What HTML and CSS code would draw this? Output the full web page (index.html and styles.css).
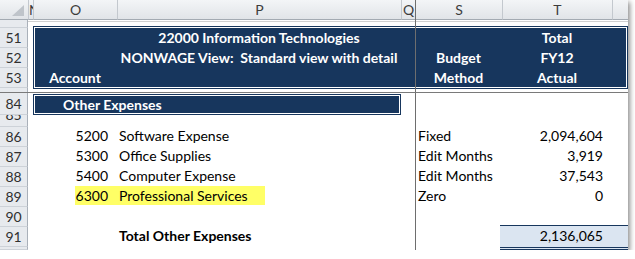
FILE: index.html
```html
<!DOCTYPE html>
<html>
<head>
<meta charset="utf-8">
<title>Other Expenses</title>
<link rel="stylesheet" href="styles.css">
</head>
<body>
<div class="sheet">
  <div class="ch corner"><svg width="12" height="11" viewBox="0 0 12 11"><polygon points="0,11 12,11 12,0" fill="#bfc4ca"/></svg></div>
  <div class="ch c-n">N</div>
  <div class="ch c-o">O</div>
  <div class="ch c-p">P</div>
  <div class="ch c-q">Q</div>
  <div class="ch c-s">S</div>
  <div class="ch c-t">T</div>
  <div class="ch c-u"></div>

  <div class="rh r-top"></div>
  <div class="rh r51">51</div>
  <div class="rh r52">52</div>
  <div class="rh r53">53</div>
  <div class="rh r-gap"></div>
  <div class="rh r84">84</div>
  <div class="rh r85 short">85</div>
  <div class="rh r86">86</div>
  <div class="rh r87">87</div>
  <div class="rh r88">88</div>
  <div class="rh r89">89</div>
  <div class="rh r90">90</div>
  <div class="rh r91">91</div>
  <div class="rh r92"></div>

  <div class="top-line"></div>

  <div class="hdr-block"></div>
  <div class="ht r51 c-p">22000 Information Technologies</div>
  <div class="ht r51 c-t">Total</div>
  <div class="ht r52 c-p">NONWAGE View:&nbsp; Standard view with detail</div>
  <div class="ht r52 c-s">Budget</div>
  <div class="ht r52 c-t">FY12</div>
  <div class="ht r53 c-o">Account</div>
  <div class="ht r53 c-s">Method</div>
  <div class="ht r53 c-t">Actual</div>

  <div class="sec-block">Other Expenses</div>

  <div class="num r86 c-o">5200</div>
  <div class="txt r86 c-p">Software Expense</div>
  <div class="txt r86 c-s">Fixed</div>
  <div class="num r86 c-t">2,094,604</div>

  <div class="num r87 c-o">5300</div>
  <div class="txt r87 c-p">Office Supplies</div>
  <div class="txt r87 c-s">Edit Months</div>
  <div class="num r87 c-t">3,919</div>

  <div class="num r88 c-o">5400</div>
  <div class="txt r88 c-p">Computer Expense</div>
  <div class="txt r88 c-s">Edit Months</div>
  <div class="num r88 c-t">37,543</div>

  <div class="hl"></div>
  <div class="num r89 c-o">6300</div>
  <div class="txt r89 c-p">Professional Services</div>
  <div class="txt r89 c-s">Zero</div>
  <div class="num r89 c-t">0</div>

  <div class="tot-fill"></div>
  <div class="txt b r91 c-p">Total Other Expenses</div>
  <div class="num r91 c-t">2,136,065</div>

  <div class="fz-v"></div>
  <div class="fz-h"></div>
</div>
</body>
</html>
```
FILE: styles.css
```css
body {
  margin: 0;
  background: #fff;
}

.sheet {
  position: relative;
  display: grid;
  grid-template-columns: 28px 5px 84px 284px 14px 87px 110px 16px;
  grid-template-rows: 20px 8px 20px 20px 20px 5px 22px 12px repeat(6, 20px) 3px;
  width: 628px;
  height: 250px;
  background: #fff;
  box-shadow: 2px 2px 5px rgba(0, 0, 0, 0.45);
  font-family: Lato, "Liberation Sans", sans-serif;
  font-size: 14px;
  color: #000;
}

/* grid placement */
.c-n { grid-column: 2; }
.c-o { grid-column: 3; }
.c-p { grid-column: 4; }
.c-q { grid-column: 5; }
.c-s { grid-column: 6; }
.c-t { grid-column: 7; }
.c-u { grid-column: 8; }

.r-top { grid-row: 2; }
.r51 { grid-row: 3; }
.r52 { grid-row: 4; }
.r53 { grid-row: 5; }
.r-gap { grid-row: 6; }
.r84 { grid-row: 7; }
.r85 { grid-row: 8; }
.r86 { grid-row: 9; }
.r87 { grid-row: 10; }
.r88 { grid-row: 11; }
.r89 { grid-row: 12; }
.r90 { grid-row: 13; }
.r91 { grid-row: 14; }
.r92 { grid-row: 15; }

/* column headers */
.ch {
  grid-row: 1;
  display: flex;
  align-items: center;
  justify-content: center;
  background: linear-gradient(#f3f5f7, #e1e4e8);
  border-left: 1px solid #c3c8ce;
  border-bottom: 1px solid #a3aab2;
  color: #3c3c3c;
  overflow: hidden;
  line-height: 17px;
}
.ch.corner {
  grid-column: 1;
  border-left: 0;
  justify-content: flex-end;
  align-items: flex-end;
  padding: 0 4px 3px 0;
}
.ch.c-n {
  justify-content: flex-start;
}

/* row headers */
.rh {
  grid-column: 1;
  display: flex;
  align-items: center;
  justify-content: center;
  background: #e7eaee;
  border-right: 1px solid #a9b0b9;
  border-bottom: 1px solid #cdd2d8;
  color: #303030;
  overflow: hidden;
  line-height: 17px;
}
.rh.short {
  align-items: flex-end;
  padding-bottom: 3px;
}

.top-line {
  grid-column: 2 / 9;
  grid-row: 2;
  margin-top: 1px;
  border-top: 1px solid #d0d0d0;
}

/* dark header band */
.hdr-block {
  grid-column: 3 / 9;
  grid-row: 2 / 6;
  margin: 6px 0 -1px;
  background: #17365d;
  border: 1px solid #17365d;
  box-shadow: inset 0 0 0 1px #fff;
}
.ht {
  display: flex;
  justify-content: center;
  align-items: flex-end;
  padding-bottom: 2px;
  line-height: 17px;
  color: #fff;
  font-weight: 700;
  white-space: nowrap;
}

.sec-block {
  grid-column: 3 / 5;
  grid-row: 7;
  margin-top: 1px;
  display: flex;
  align-items: flex-end;
  padding: 0 0 1px 29px;
  line-height: 17px;
  background: #17365d;
  border: 1px solid #17365d;
  box-shadow: inset 0 0 0 1px #fff;
  color: #fff;
  font-weight: 700;
}

/* data cells */
.num {
  display: flex;
  justify-content: flex-end;
  align-items: flex-end;
  padding: 0 9px 3px 0;
  line-height: 17px;
  white-space: nowrap;
}
.txt {
  display: flex;
  align-items: flex-end;
  padding: 0 0 3px 2px;
  line-height: 17px;
  white-space: nowrap;
}
.txt.c-s {
  padding-left: 3px;
}
.b {
  font-weight: 700;
}

.hl {
  grid-column: 3 / 5;
  grid-row: 12;
  margin: -1px 136px 2px 42px;
  background: #ffff66;
}

.tot-fill {
  grid-column: 7 / 9;
  grid-row: 14 / 16;
  margin: -2px 0 0 -2px;
  background: #dbe5f1;
  border-top: 1px solid #17365d;
  border-bottom: 3px double #17365d;
}

/* freeze pane lines */
.fz-v {
  position: absolute;
  left: 415px;
  top: 0;
  width: 1px;
  height: 250px;
  background: #6e6e6e;
}
.fz-h {
  position: absolute;
  left: 0;
  top: 92px;
  width: 628px;
  height: 1px;
  background: #7a7a7a;
}
```
